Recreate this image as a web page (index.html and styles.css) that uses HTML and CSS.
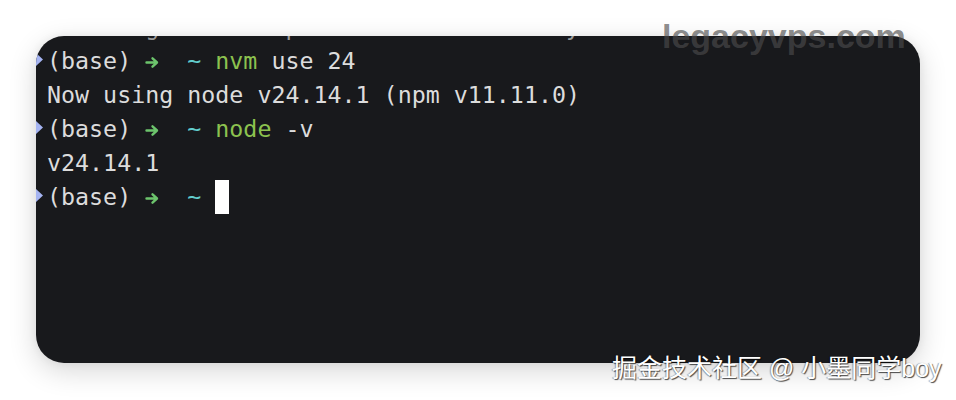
FILE: index.html
```html
<!DOCTYPE html>
<html lang="zh">
<head>
<meta charset="utf-8">
<title>Terminal</title>
<link rel="stylesheet" href="styles.css">
</head>
<body>
<div class="page">
  <div class="term">
    <div class="line prev">Creating default profile for node only...</div>
    <div class="line"><svg class="mark" viewBox="0 0 11 34"><polygon points="0,9 7,15.5 0,22"/></svg><span class="base">(base)</span> <svg class="arrow" viewBox="0 0 14 34"><path d="M1.5 18.5H11.5M7.5 14.3L12 18.5L7.5 22.7"/></svg>  <span class="tilde">~</span> <span class="cmd">nvm</span> use 24</div>
    <div class="line">Now using node v24.14.1 (npm v11.11.0)</div>
    <div class="line"><svg class="mark" viewBox="0 0 11 34"><polygon points="0,9 7,15.5 0,22"/></svg><span class="base">(base)</span> <svg class="arrow" viewBox="0 0 14 34"><path d="M1.5 18.5H11.5M7.5 14.3L12 18.5L7.5 22.7"/></svg>  <span class="tilde">~</span> <span class="cmd">node</span> -v</div>
    <div class="line">v24.14.1</div>
    <div class="line"><svg class="mark" viewBox="0 0 11 34"><polygon points="0,9 7,15.5 0,22"/></svg><span class="base">(base)</span> <svg class="arrow" viewBox="0 0 14 34"><path d="M1.5 18.5H11.5M7.5 14.3L12 18.5L7.5 22.7"/></svg>  <span class="tilde">~</span> <span class="cursor"></span></div>
  </div>
  <div class="wm-top">legacyvps.com</div>
  <div class="wm-bottom">掘金技术社区 @ 小墨同学boy</div>
</div>
</body>
</html>
```

FILE: styles.css
```css
html, body {
  margin: 0;
  padding: 0;
  background: #ffffff;
}

.page {
  position: relative;
  width: 956px;
  height: 400px;
  overflow: hidden;
  padding-top: 36px;
  box-sizing: border-box;
}

.term {
  margin-left: 36px;
  width: 884px;
  height: 327px;
  box-sizing: border-box;
  padding: 8px 0 0 11px;
  background: #18191c;
  border-radius: 28px;
  overflow: hidden;
  box-shadow: 0 8px 28px rgba(0, 0, 0, 0.16), 0 0 10px rgba(0, 0, 0, 0.06);
  font-family: "DejaVu Sans Mono", monospace;
  font-size: 23.3px;
  line-height: 34px;
  color: #dcdcdc;
}

.line {
  height: 34px;
  white-space: pre;
}

.prev {
  margin-top: -34px;
  color: #9a9a9a;
}

.mark {
  display: inline-block;
  width: 11px;
  height: 34px;
  margin-left: -11px;
  vertical-align: top;
  fill: #a5b4f2;
}

.base {
  color: #dcdcdc;
}

.arrow {
  display: inline-block;
  width: 14px;
  height: 34px;
  vertical-align: top;
  fill: none;
  stroke: #6cc46c;
  stroke-width: 2.4;
  stroke-linecap: round;
  stroke-linejoin: round;
}

.tilde {
  color: #62cccc;
}

.cmd {
  color: #8cc24f;
}

.cursor {
  display: inline-block;
  width: 14px;
  height: 34px;
  vertical-align: top;
  background: #ffffff;
}

.wm-top {
  position: absolute;
  left: 662px;
  top: 19px;
  font-family: "Liberation Sans", Arial, sans-serif;
  font-weight: bold;
  font-size: 34px;
  line-height: 1;
  color: rgba(76, 76, 76, 0.65);
}

.wm-bottom {
  position: absolute;
  left: 612px;
  top: 356px;
  font-family: "Liberation Sans", "Noto Sans CJK SC", sans-serif;
  font-size: 25px;
  line-height: 1;
  color: #ffffff;
  white-space: nowrap;
  text-shadow: 1px 1px 1px rgba(0, 0, 0, 0.7), -1px 0 1px rgba(0, 0, 0, 0.35);
}
```
